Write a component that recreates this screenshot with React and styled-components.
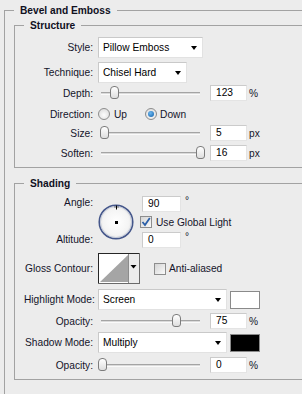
import React from 'react';
import styled, { createGlobalStyle } from 'styled-components';

const Global = createGlobalStyle`
  *, *::before, *::after { box-sizing: border-box; }
  html, body { margin: 0; padding: 0; background: #ececec; overflow: hidden; }
  body { font-family: "Liberation Sans", Arial, sans-serif; font-size: 10.2px; color: #14142a; }
`;

const Page = styled.div`
  width: 302px;
  height: 394px;
  overflow: hidden;
  background: #ececec;
  padding-top: 4px;
`;

const Group = styled.fieldset`
  margin: ${p => p.$m || '0'};
  padding: ${p => p.$pad};
  border: 1px solid #a2a2a2;
  width: ${p => p.$w}px;
  min-width: 0;
  min-height: ${p => p.$minH || 0}px;
`;

const Legend = styled.legend`
  padding: 0 6px;
  font-weight: bold;
  font-size: 10.2px;
  line-height: 13px;
  color: #10101e;
`;

const Row = styled.div`
  display: flex;
  align-items: center;
  height: ${p => p.$h}px;
  margin-top: ${p => p.$mt || 0}px;
`;

const Label = styled.div`
  width: 69px;
  margin-right: 5px;
  flex-shrink: 0;
  text-align: right;
  white-space: nowrap;
  line-height: 13px;
`;

const SelectBox = styled.div`
  width: ${p => p.$w}px;
  height: 21px;
  background: #fff;
  border: 1px solid;
  border-color: #c9c9c9 #e2e2e2 #e2e2e2 #c9c9c9;
  display: flex;
  align-items: center;
  justify-content: space-between;
  padding: 0 5px 0 4px;
  color: #000;
  white-space: nowrap;
  flex-shrink: 0;
`;

const Arrow = styled.span`
  width: 0;
  height: 0;
  border-left: 3.5px solid transparent;
  border-right: 3.5px solid transparent;
  border-top: 4px solid #000;
`;

const SliderWrap = styled.div`
  position: relative;
  width: 107px;
  height: 16px;
  flex-shrink: 0;
`;

const Track = styled.div`
  margin: 7px 5px 0 3px;
  height: 3px;
  border-top: 1px solid #a4a4a4;
  border-bottom: 1px solid #fafafa;
  background: #dadada;
`;

const Thumb = styled.div`
  position: absolute;
  top: 1px;
  width: 9px;
  height: 13px;
  border: 1px solid #7c7c7c;
  border-radius: 4px 4px 3px 3px;
  background: linear-gradient(#ffffff, #dedede);
`;

const Input = styled.div`
  width: ${p => p.$w || 37}px;
  height: 16px;
  margin-left: ${p => p.$ml || 0}px;
  background: #fff;
  border: 1px solid;
  border-color: #cbcbcb #e4e4e4 #e4e4e4 #cbcbcb;
  padding-left: 5px;
  line-height: 14px;
  color: #000;
  flex-shrink: 0;
`;

const Unit = styled.span`
  margin-left: ${p => p.$ml || 2}px;
  align-self: ${p => (p.$sup ? 'flex-start' : 'center')};
  line-height: ${p => (p.$sup ? '10px' : '13px')};
  color: #14142a;
`;

const Radio = styled.span`
  width: 12px;
  height: 12px;
  border-radius: 50%;
  border: 1px solid #8d8d8d;
  background: radial-gradient(circle at 50% 60%, #fdfdfd, #d6d6d6);
  display: flex;
  align-items: center;
  justify-content: center;
  margin-left: ${p => p.$ml || 0}px;
  flex-shrink: 0;
  &::after {
    content: '';
    display: ${p => (p.$on ? 'block' : 'none')};
    width: 6px;
    height: 6px;
    border-radius: 50%;
    background: radial-gradient(circle at 40% 35%, #6db8f0, #0f5ea8);
  }
`;

const OptText = styled.span`
  margin-left: ${p => p.$ml || 4}px;
  white-space: nowrap;
`;

const CheckBox = styled.span`
  width: 12px;
  height: 12px;
  border: 1px solid #8d8d8d;
  background: linear-gradient(135deg, #d4d4d4, #fafafa);
  margin-left: ${p => p.$ml || 0}px;
  display: flex;
  align-items: center;
  justify-content: center;
  flex-shrink: 0;
`;

const AngleBlock = styled.div`
  display: flex;
  height: 52px;
`;

const LabelCol = styled.div`
  width: 69px;
  margin-right: 5px;
  display: flex;
  flex-direction: column;
  justify-content: space-between;
  text-align: right;
  line-height: 13px;
  padding: 0 0 2px;
`;

const DialWrap = styled.div`
  width: 36px;
  height: 36px;
  margin-top: 8px;
  flex-shrink: 0;
`;

const RightCol = styled.div`
  margin-left: 5px;
  display: grid;
  grid-template-rows: 16px 20px 16px;
`;

const Swatch = styled.div`
  width: 30px;
  height: 18px;
  margin-left: 3px;
  border: 1px solid #8a8a8a;
  background: ${p => p.$c};
  flex-shrink: 0;
`;

const ContourBox = styled.div`
  width: 42px;
  height: 31px;
  flex-shrink: 0;
  display: flex;
`;

function Select({ w, children }) {
  return (
    <SelectBox $w={w}>
      <span>{children}</span>
      <Arrow />
    </SelectBox>
  );
}

function Slider({ pct }) {
  return (
    <SliderWrap>
      <Track />
      <Thumb style={{ left: `${(pct / 100) * 98}px` }} />
    </SliderWrap>
  );
}

function Check({ on, ml }) {
  return (
    <CheckBox $ml={ml}>
      {on && (
        <svg width="10" height="10" viewBox="0 0 10 10">
          <path d="M1.5 5 L4 8 L8.8 1" fill="none" stroke="#2b5fa8" strokeWidth="1.8" />
        </svg>
      )}
    </CheckBox>
  );
}

function Dial() {
  return (
    <DialWrap>
      <svg width="36" height="36" viewBox="0 0 36 36">
        <defs>
          <radialGradient id="dialg" cx="50%" cy="50%" r="55%">
            <stop offset="0" stopColor="#ffffff" />
            <stop offset="0.7" stopColor="#f4f4f4" />
            <stop offset="1" stopColor="#dcdcdc" />
          </radialGradient>
        </defs>
        <circle cx="18" cy="18" r="16.8" fill="url(#dialg)" stroke="#44568a" strokeWidth="1.5" />
        <circle cx="18" cy="18" r="15.6" fill="none" stroke="#aab4cc" strokeWidth="0.6" />
        <rect x="17" y="17" width="3" height="3" fill="#000" />
        <rect x="18" y="1.5" width="1" height="4" fill="#000" />
        <rect x="16.5" y="2.5" width="1" height="1" fill="#000" />
        <rect x="19.5" y="2.5" width="1" height="1" fill="#000" />
      </svg>
    </DialWrap>
  );
}

function Contour() {
  return (
    <ContourBox>
      <svg width="42" height="31" viewBox="0 0 42 31">
        <rect x="0.5" y="0.5" width="41" height="30" fill="#fff" stroke="#262626" />
        <polygon points="2,29 30,2 30,29" fill="#a5a5a5" />
        <rect x="30" y="1" width="11" height="29" fill="#ececec" />
        <line x1="30.5" y1="1" x2="30.5" y2="30" stroke="#8c8c8c" />
        <polygon points="32.5,12 38.5,12 35.5,15.5" fill="#000" />
        <line x1="41.5" y1="0" x2="41.5" y2="31" stroke="#6a6a6a" />
        <line x1="0" y1="30.5" x2="42" y2="30.5" stroke="#6a6a6a" />
      </svg>
    </ContourBox>
  );
}

export default function App() {
  return (
    <Page>
      <Global />
      <Group $m="0 0 0 4px" $pad="2px 0 0 9px" $w={340} $minH={430}>
        <Legend>Bevel and Emboss</Legend>

        <Group $pad="5px 0 6px 9px" $w={330}>
          <Legend>Structure</Legend>
          <Row $h={21}>
            <Label>Style:</Label>
            <Select w={105}>Pillow Emboss</Select>
          </Row>
          <Row $h={21} $mt={4}>
            <Label>Technique:</Label>
            <Select w={89}>Chisel Hard</Select>
          </Row>
          <Row $h={16} $mt={2}>
            <Label>Depth:</Label>
            <Slider pct={12.3} />
            <Input $ml={5}>123</Input>
            <Unit>%</Unit>
          </Row>
          <Row $h={16} $mt={5}>
            <Label>Direction:</Label>
            <Radio />
            <OptText>Up</OptText>
            <Radio $on $ml={18} />
            <OptText $ml={3}>Down</OptText>
          </Row>
          <Row $h={16} $mt={3}>
            <Label>Size:</Label>
            <Slider pct={2} />
            <Input $ml={5}>5</Input>
            <Unit>px</Unit>
          </Row>
          <Row $h={16} $mt={4}>
            <Label>Soften:</Label>
            <Slider pct={100} />
            <Input $ml={5}>16</Input>
            <Unit>px</Unit>
          </Row>
        </Group>

        <Group $m="9px 0 0 0" $pad="6px 0 6px 9px" $w={330}>
          <Legend>Shading</Legend>
          <AngleBlock>
            <LabelCol>
              <span>Angle:</span>
              <span>Altitude:</span>
            </LabelCol>
            <Dial />
            <RightCol>
              <Row $h={16}>
                <Input $w={39} $ml={3}>90</Input>
                <Unit $sup $ml={4}>°</Unit>
              </Row>
              <Row $h={20}>
                <Check on ml={1} />
                <OptText $ml={4}>Use Global Light</OptText>
              </Row>
              <Row $h={16}>
                <Input $w={39} $ml={3}>0</Input>
                <Unit $sup $ml={4}>°</Unit>
              </Row>
            </RightCol>
          </AngleBlock>
          <Row $h={31} $mt={5}>
            <Label>Gloss Contour:</Label>
            <Contour />
            <Check ml={14} />
            <OptText $ml={3}>Anti-aliased</OptText>
          </Row>
          <Row $h={21} $mt={5}>
            <Label>Highlight Mode:</Label>
            <Select w={129}>Screen</Select>
            <Swatch $c="#ffffff" />
          </Row>
          <Row $h={16} $mt={3}>
            <Label>Opacity:</Label>
            <Slider pct={75} />
            <Input $ml={5}>75</Input>
            <Unit>%</Unit>
          </Row>
          <Row $h={21} $mt={3}>
            <Label>Shadow Mode:</Label>
            <Select w={129}>Multiply</Select>
            <Swatch $c="#000000" />
          </Row>
          <Row $h={16} $mt={4}>
            <Label>Opacity:</Label>
            <Slider pct={0} />
            <Input $ml={5}>0</Input>
            <Unit>%</Unit>
          </Row>
        </Group>
      </Group>
    </Page>
  );
}
